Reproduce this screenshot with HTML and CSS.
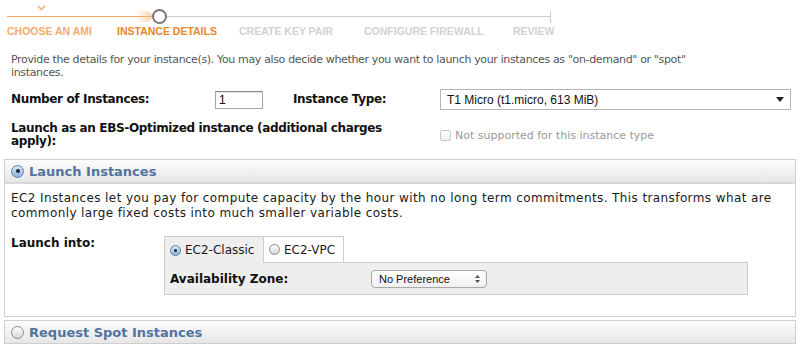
FILE: index.html
```html
<!DOCTYPE html>
<html lang="en">
<head>
    <meta charset="UTF-8">
    <title>Request Instances Wizard</title>
    <link rel="stylesheet" href="styles.css">
</head>
<body>

    <div class="wizard">
        <div class="track">
            <div class="line-done">
                <svg class="check" width="9" height="7" viewBox="0 0 9 7">
                    <polyline points="1,2 4.5,5.5 8,1.5" fill="none" stroke="#f3b677" stroke-width="1.6"/>
                </svg>
            </div>
            <div class="dot"></div>
            <div class="line-todo"></div>
            <div class="tick"></div>
        </div>
        <div class="steps">
            <span class="step done">Choose an AMI</span>
            <span class="step current">Instance Details</span>
            <span class="step">Create Key Pair</span>
            <span class="step">Configure Firewall</span>
            <span class="step">Review</span>
        </div>
    </div>

    <p class="intro">Provide the details for your instance(s). You may also decide whether you want to launch your instances as "on-demand" or "spot" instances.</p>

    <div class="fields">
        <label class="fieldlabel" for="count">Number of Instances:</label>
        <input class="count" type="text" id="count" value="1">
        <label class="fieldlabel">Instance Type:</label>
        <div class="select-wide">
            <span>T1 Micro (t1.micro, 613 MiB)</span>
            <svg width="8" height="5" viewBox="0 0 8 5"><polygon points="0,0 8,0 4,5" fill="#222"/></svg>
        </div>

        <label class="fieldlabel wide">Launch as an EBS-Optimized instance (additional charges apply):</label>
        <div class="ebs">
            <span class="checkbox"></span>
            <span>Not supported for this instance type</span>
        </div>
    </div>

    <div class="panel first">
        <div class="panel-head"><span class="radio on"></span>Launch Instances</div>
        <div class="panel-body">
            <p>EC2 Instances let you pay for compute capacity by the hour with no long term commitments. This transforms what are commonly large fixed costs into much smaller variable costs.</p>

            <div class="launch-row">
                <span class="fieldlabel launch-label">Launch into:</span>
                <div class="tabbox">
                    <div class="tab-bar">
                        <div class="tab active"><span class="radio small on"></span>EC2-Classic</div>
                        <div class="tab"><span class="radio small"></span>EC2-VPC</div>
                    </div>
                    <div class="tab-pane">
                        <span class="fieldlabel zone-label">Availability Zone:</span>
                        <div class="select-mini">
                            <span>No Preference</span>
                            <svg width="5" height="8" viewBox="0 0 5 8">
                                <polygon points="0,3 5,3 2.5,0" fill="#555"/>
                                <polygon points="0,5 5,5 2.5,8" fill="#555"/>
                            </svg>
                        </div>
                    </div>
                </div>
            </div>
        </div>
    </div>

    <div class="panel">
        <div class="panel-head"><span class="radio"></span>Request Spot Instances</div>
    </div>

</body>
</html>
```

FILE: styles.css
```css
* {
    box-sizing: border-box;
    margin: 0;
}

body {
    font-family: 'DejaVu Sans', Verdana, sans-serif;
    font-size: 12px;
    color: #222;
    background-color: #fff;
    width: 800px;
    height: 350px;
    overflow: hidden;
}

/* wizard progress */

.track {
    display: flex;
    align-items: center;
    margin: 9px 0 0 7px;
    width: 544px;
    height: 15px;
}

.line-done {
    position: relative;
    width: 145px;
    height: 1px;
    background-color: #f2a860;
}

.line-done::after {
    content: "";
    position: absolute;
    right: 0;
    top: -5px;
    width: 16px;
    height: 11px;
    background: linear-gradient(to right, rgba(247, 178, 110, 0), rgba(247, 178, 110, 0.55));
    border-radius: 0 6px 6px 0;
}

.check {
    position: absolute;
    left: 30px;
    top: -12px;
}

.dot {
    width: 15px;
    height: 15px;
    border: 2px solid #777;
    border-radius: 50%;
    background-color: #fff;
    position: relative;
    z-index: 1;
}

.line-todo {
    flex: 1;
    height: 1px;
    background-color: #ccc;
}

.tick {
    width: 1px;
    height: 12px;
    background-color: #ccc;
}

.steps {
    display: grid;
    grid-template-columns: 110px 122px 125px 149px auto;
    margin: 2px 0 0 7px;
    font-family: 'Liberation Sans', Arial, sans-serif;
    font-size: 10.5px;
    line-height: 11px;
    font-weight: bold;
    text-transform: uppercase;
    color: #d2d2d2;
}

.step.done {
    color: #f3ac68;
}

.step.current {
    color: #e8862c;
}

/* intro + fields */

.intro {
    margin: 16px 0 0 11px;
    max-width: 720px;
    font-size: 11px;
    letter-spacing: -0.35px;
    line-height: 13px;
    color: #555;
}

.fieldlabel {
    font-weight: bold;
    line-height: 13px;
    color: #111;
}

.fields {
    display: grid;
    grid-template-columns: 204px 78px 147px 351px;
    align-items: center;
    row-gap: 12px;
    margin: 10px 0 0 11px;
}

.fields .fieldlabel {
    letter-spacing: -0.35px;
}

.fields .wide {
    grid-column: 1 / 4;
    width: 400px;
}

.count {
    width: 48px;
    height: 18px;
    padding: 0 3px;
    border: 1px solid #a5a5a5;
    border-top-color: #888;
    font-family: 'Liberation Sans', Arial, sans-serif;
    font-size: 12px;
    color: #000;
    box-shadow: inset 0 1px 1px rgba(0, 0, 0, 0.12);
}

.select-wide {
    display: flex;
    align-items: center;
    justify-content: space-between;
    height: 21px;
    padding: 0 6px;
    border: 1px solid #b5b5b5;
    background-color: #fff;
    font-family: 'Liberation Sans', Arial, sans-serif;
    font-size: 12px;
    color: #111;
}

.ebs {
    display: flex;
    align-items: center;
    gap: 4px;
    font-size: 11px;
    color: #9a9a9a;
}

.checkbox {
    width: 11px;
    height: 11px;
    border: 1px solid #c8c8c8;
    border-radius: 2px;
    background: linear-gradient(#fff, #ececec);
}

/* panels */

.panel {
    margin: 3px 4px 0;
    border: 1px solid #cfcfcf;
}

.panel.first {
    margin-top: 11px;
}

.panel-head {
    display: flex;
    align-items: center;
    gap: 5px;
    height: 22px;
    padding-left: 6px;
    background: linear-gradient(#fdfdfd, #e6e6e6);
    font-size: 13px;
    font-weight: bold;
    color: #52739f;
}

.panel.first .panel-head {
    height: 24px;
    border-bottom: 2px solid #d9d9d9;
}

.radio {
    display: inline-flex;
    align-items: center;
    justify-content: center;
    width: 13px;
    height: 13px;
    border: 1px solid #8d8d8d;
    border-radius: 50%;
    background: linear-gradient(#fdfdfd, #d8d8d8);
    flex-shrink: 0;
}

.radio.on {
    border-color: #5d7ea6;
    background: linear-gradient(#dce8f7, #8db0dc);
}

.radio.on::after {
    content: "";
    width: 4px;
    height: 4px;
    border-radius: 50%;
    background-color: #1d2633;
}

.radio.small {
    width: 11px;
    height: 11px;
}

.radio.small.on::after {
    width: 3px;
    height: 3px;
}

.panel-body {
    padding: 7px 6px 21px;
}

.panel-body p {
    line-height: 15px;
    letter-spacing: 0.4px;
    color: #1a1a1a;
}

.launch-row {
    display: flex;
    align-items: flex-start;
    margin-top: 15px;
}

.launch-label {
    width: 153px;
    line-height: 15px;
}

/* tabs */

.tabbox {
    width: 584px;
}

.tab-bar {
    display: flex;
    align-items: flex-start;
    border-bottom: 1px solid #ccc;
}

.tab {
    display: flex;
    align-items: center;
    gap: 4px;
    height: 26px;
    padding-left: 5px;
    border: 1px solid #ccc;
    border-bottom: none;
    background-color: #fff;
    color: #1a1a1a;
}

.tab:first-child {
    width: 100px;
}

.tab + .tab {
    width: 81px;
    margin-left: -1px;
}

.tab.active {
    height: 27px;
    margin-bottom: -1px;
    background-color: #eee;
}

.tab-pane {
    display: flex;
    align-items: center;
    padding: 7px 5px 6px;
    border: 1px solid #ccc;
    border-top: none;
    background-color: #eee;
}

.zone-label {
    width: 201px;
}

.select-mini {
    display: flex;
    align-items: center;
    justify-content: space-between;
    width: 116px;
    height: 18px;
    padding: 0 6px 0 7px;
    border: 1px solid #a8a8a8;
    border-radius: 4px;
    background: linear-gradient(#fff, #f0f0f0);
    font-family: 'Liberation Sans', Arial, sans-serif;
    font-size: 11px;
    color: #111;
}
```
